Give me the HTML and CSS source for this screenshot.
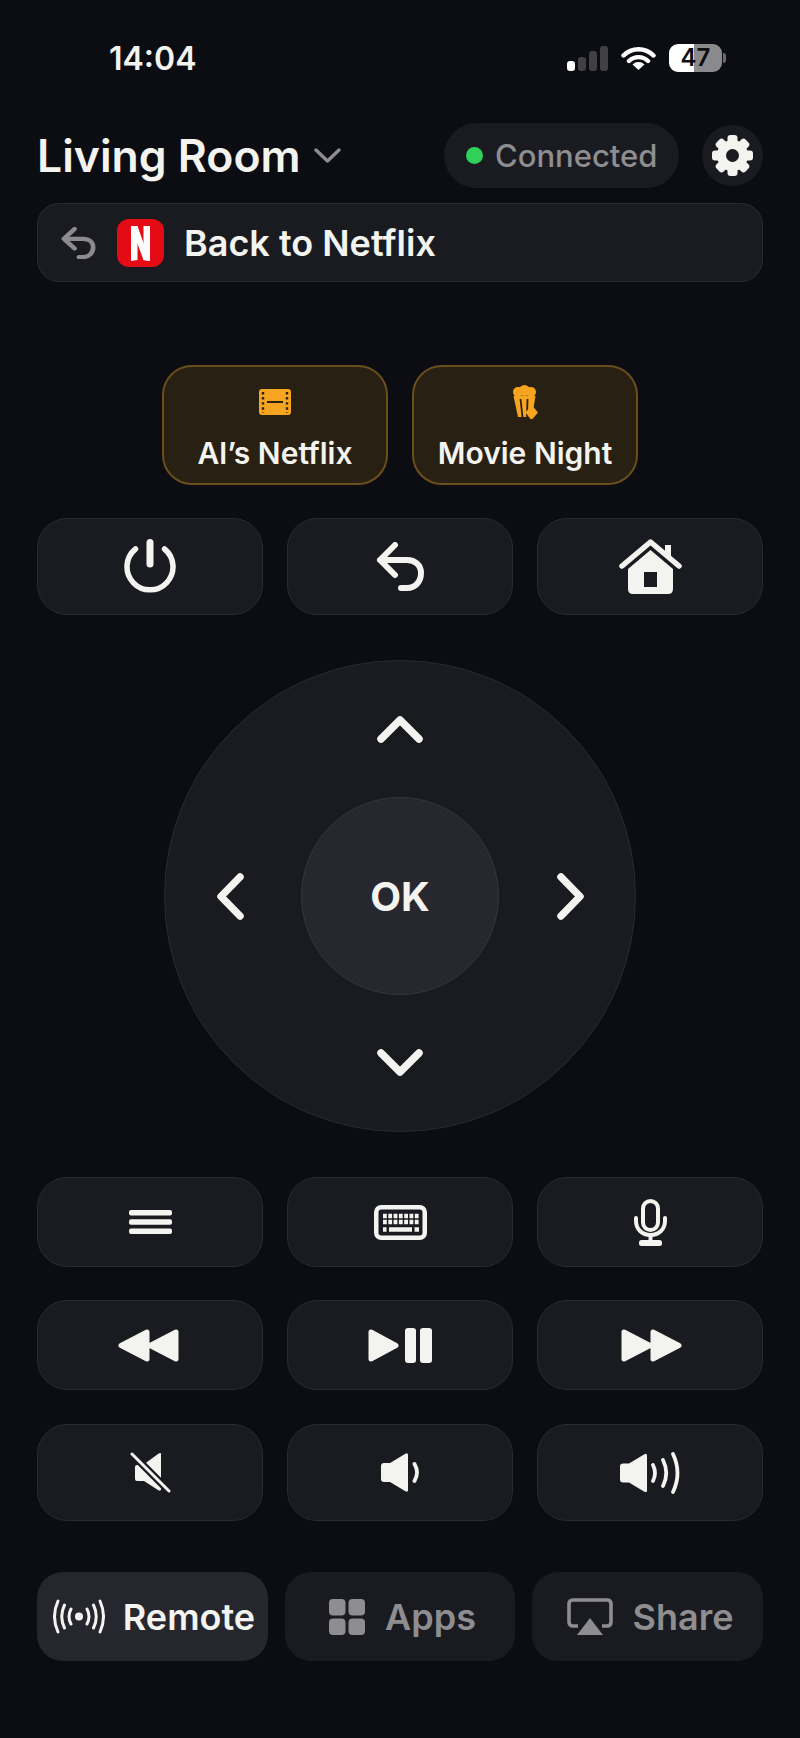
FILE: index.html

```html
<html>
    <head>
        <title>Remote</title>
        <link rel="stylesheet" href="styles.css">
    </head>
    <body>
        <div class="screen">
            <!-- status bar -->
            <div class="status-bar">
                <div class="time">14:04</div>
                <div class="status-icons">
                    <div class="signal">
                        <span class="bar bar-1"></span>
                        <span class="bar bar-2"></span>
                        <span class="bar bar-3"></span>
                        <span class="bar bar-4"></span>
                    </div>
                    <svg class="wifi" width="35" height="24" viewBox="0 0 35 24">
                        <path d="M2.5 9.5A21 21 0 0 1 32.5 9.5M8 15A13.5 13.5 0 0 1 27 15" fill="none" stroke="#fff" stroke-width="4.4" stroke-linecap="round"/>
                        <path d="M17.5 24L11.5 18.4A8.6 8.6 0 0 1 23.5 18.4Z" fill="#fff"/>
                    </svg>
                    <div class="battery-wrap">
                        <div class="battery">47</div>
                        <div class="battery-nub"></div>
                    </div>
                </div>
            </div>

            <!-- header -->
            <div class="header">
                <div class="room">Living Room</div>
                <svg class="room-caret" width="27" height="15" viewBox="0 0 27 15">
                    <path d="M2 2L13.5 13L25 2" fill="none" stroke="#8e8e91" stroke-width="3.4" stroke-linecap="round" stroke-linejoin="round"/>
                </svg>
                <div class="connected"><span class="dot"></span>Connected</div>
                <div class="settings">
                    <svg width="41" height="41" viewBox="0 0 41 41">
                        <g fill="#f3f3ef">
                            <rect x="15.5" y="0" width="10" height="41" rx="3"/>
                            <rect x="15.5" y="0" width="10" height="41" rx="3" transform="rotate(45 20.5 20.5)"/>
                            <rect x="15.5" y="0" width="10" height="41" rx="3" transform="rotate(90 20.5 20.5)"/>
                            <rect x="15.5" y="0" width="10" height="41" rx="3" transform="rotate(135 20.5 20.5)"/>
                            <circle cx="20.5" cy="20.5" r="15.5"/>
                        </g>
                        <circle cx="20.5" cy="20.5" r="6.5" fill="#1a1b21"/>
                    </svg>
                </div>
            </div>

            <div class="back-bar">
                <svg width="35" height="32" viewBox="0 0 49 49" preserveAspectRatio="none">
                    <path d="M19 3L4 18L19 33M4 18H31C39 18 45 23 45 31C45 40 39 46 31 46H25" fill="none" stroke="#8c8c8f" stroke-width="6.5" stroke-linecap="round" stroke-linejoin="round"/>
                </svg>
                <svg class="netflix" width="47" height="48" viewBox="0 0 47 48">
                    <rect width="47" height="48" rx="12" fill="#e50b14"/>
                    <path d="M14 7H20.5V41L14 42ZM26.500 7H33V42L26.500 41Z" fill="#fff"/>
                    <path d="M14 7H20.5L33 42L26.500 41Z" fill="#fff"/>
                </svg>
                <span class="back-label">Back to Netflix</span>
            </div>

            <!-- shortcuts -->
            <div class="shortcuts">
                <button class="shortcut">
                    <span class="shortcut-icon">
                        <svg width="32" height="26" viewBox="0 0 32 26">
                            <rect width="32" height="26" rx="3" fill="#f7a520"/>
                            <path d="M4 3V24M28 3V24" stroke="#2a2113" stroke-width="2.4" stroke-dasharray="2.4 2.7" fill="none"/>
                            <path d="M8 13H24" stroke="#2a2113" stroke-width="2" fill="none"/>
                        </svg>
                    </span>
                    <span class="shortcut-label">Al’s Netflix</span>
                </button>
                <button class="shortcut">
                    <span class="shortcut-icon">
                        <svg width="26" height="34" viewBox="0 0 26 34">
                            <g fill="#f7a520">
                                <circle cx="6" cy="7" r="5"/>
                                <circle cx="12.500" cy="5.500" r="5.500"/>
                                <circle cx="19" cy="7" r="5"/>
                                <path d="M1.500 11H23.500L20 32H6Z"/>
                            </g>
                            <path d="M8.500 14L10.500 32M15.500 14L15 32" stroke="#2a2113" stroke-width="1.800" fill="none"/>
                            <path d="M19 28L24 34H14Z" fill="#2a2113"/>
                            <path d="M19.500 21L25 27.500L19.500 34L14.500 27.500Z" fill="#f7a520" stroke="#f7a520" stroke-width="1.500" stroke-linejoin="round"/>
                        </svg>
                    </span>
                    <span class="shortcut-label">Movie Night</span>
                </button>
            </div>

            <div class="key-row tall row-top">
                <button class="key">
                    <svg width="52" height="55" viewBox="0 0 52 55">
                        <path d="M11.500 10A23 23 0 1 0 40.500 10" fill="none" stroke="#f3f3ef" stroke-width="5.500" stroke-linecap="round"/>
                        <path d="M26 3.500V25" stroke="#f3f3ef" stroke-width="7" stroke-linecap="round"/>
                    </svg>
                </button>
                <button class="key">
                    <svg width="49" height="49" viewBox="0 0 49 49">
                        <path d="M19 3L4 18L19 33M4 18H31C39 18 45 23 45 31C45 40 39 46 31 46H25" fill="none" stroke="#f3f3ef" stroke-width="6" stroke-linecap="round" stroke-linejoin="round"/>
                    </svg>
                </button>
                <button class="key">
                    <svg width="63" height="55" viewBox="0 0 63 55">
                        <path d="M3 27L31.500 3L60 27" fill="none" stroke="#f3f3ef" stroke-width="5.500" stroke-linecap="round" stroke-linejoin="round"/>
                        <rect x="46" y="6" width="6" height="12" fill="#f3f3ef"/>
                        <path fill-rule="evenodd" d="M31.500 11L54 30V50Q54 55 49 55H14Q9 55 9 50V30ZM25 33V48H38V33Z" fill="#f3f3ef"/>
                    </svg>
                </button>
            </div>

            <!-- d-pad -->
            <div class="dpad">
                <button class="arrow arrow-up">
                    <svg width="46" height="28" viewBox="0 0 46 28"><path d="M4 24L23 5L42 24"/></svg>
                </button>
                <button class="arrow arrow-left">
                    <svg width="28" height="47" viewBox="0 0 28 47"><path d="M24 4L5 23.500L24 43"/></svg>
                </button>
                <button class="ok">OK</button>
                <button class="arrow arrow-right">
                    <svg width="28" height="47" viewBox="0 0 28 47"><path d="M4 4L23 23.500L4 43"/></svg>
                </button>
                <button class="arrow arrow-down">
                    <svg width="46" height="28" viewBox="0 0 46 28"><path d="M4 4L23 23L42 4"/></svg>
                </button>
            </div>

            <div class="key-row row-menu">
                <button class="key">
                    <svg width="43" height="24" viewBox="0 0 43 24">
                        <g fill="#f3f3ef">
                            <rect width="43" height="5.500" rx="2"/>
                            <rect y="9.250" width="43" height="5.500" rx="2"/>
                            <rect y="18.500" width="43" height="5.500" rx="2"/>
                        </g>
                    </svg>
                </button>
                <button class="key">
                    <svg width="53" height="35" viewBox="0 0 53 35">
                        <rect x="2.250" y="2.250" width="48.500" height="30.500" rx="5" fill="none" stroke="#f3f3ef" stroke-width="4.500"/>
                        <path d="M9 11H45M9 17H45" stroke="#f3f3ef" stroke-width="4.500" stroke-dasharray="3.800 1.500" fill="none"/>
                        <path d="M9 24.500H12.500M15 24.500H38M40.500 24.500H45" stroke="#f3f3ef" stroke-width="4.500" fill="none"/>
                    </svg>
                </button>
                <button class="key">
                    <svg width="33" height="47" viewBox="0 0 33 47">
                        <rect x="9" y="2" width="15" height="29" rx="7.500" fill="none" stroke="#f3f3ef" stroke-width="4"/>
                        <path d="M2 19V22C2 30 8 36 16.500 36C25 36 31 30 31 22V19" fill="none" stroke="#f3f3ef" stroke-width="4" stroke-linecap="round"/>
                        <path d="M16.500 36V44" stroke="#f3f3ef" stroke-width="4" fill="none"/>
                        <rect x="5" y="41" width="23" height="6" rx="2.500" fill="#f3f3ef"/>
                    </svg>
                </button>
            </div>

            <div class="key-row row-media">
                <button class="key">
                    <svg class="rewind" width="61" height="35" viewBox="0 0 61 35">
                        <path class="media-shape" d="M29 4V31L3 17.500ZM58 4V31L32 17.500Z"/>
                    </svg>
                </button>
                <button class="key">
                    <svg width="64" height="35" viewBox="0 0 64 35">
                        <path class="media-shape" d="M3 4V31L28 17.500Z"/>
                        <rect x="37" y="0" width="11" height="35" rx="3" fill="#f3f3ef"/>
                        <rect x="52" y="0" width="12" height="35" rx="3" fill="#f3f3ef"/>
                    </svg>
                </button>
                <button class="key">
                    <svg class="forward" width="61" height="35" viewBox="0 0 61 35">
                        <path class="media-shape" d="M3 4V31L29 17.500ZM32 4V31L58 17.500Z"/>
                    </svg>
                </button>
            </div>

            <div class="key-row tall row-volume">
                <button class="key">
                    <svg width="41" height="41" viewBox="0 0 41 41">
                        <path d="M31 2V37Q31 40 28 38L14 29H7Q5 29 5 27V15Q5 13 7 13H13L28 2Q31 0 31 2Z" fill="#f3f3ef"/>
                        <path d="M2 2L39 39" stroke="#1a1b21" stroke-width="7.500" fill="none"/>
                        <path d="M2 2L39 39" stroke="#f3f3ef" stroke-width="3" stroke-linecap="round" fill="none"/>
                    </svg>
                </button>
                <button class="key">
                    <svg width="39" height="39" viewBox="0 0 39 39">
                        <path d="M3 10H9L24 1Q27 -1 27 2V37Q27 40 24 38L9 29H3Q0 29 0 26V13Q0 10 3 10Z" fill="#f3f3ef"/>
                        <path d="M33.500 11Q38.500 19.500 33.500 28" fill="none" stroke="#f3f3ef" stroke-width="3.800" stroke-linecap="round"/>
                    </svg>
                </button>
                <button class="key">
                    <svg width="61" height="42" viewBox="0 0 61 42">
                        <path d="M3 11.500H9L24 2.500Q27 .5 27 3.500V38.500Q27 41.500 24 39.500L9 30.500H3Q0 30.500 0 27.500V14.500Q0 11.500 3 11.500Z" fill="#f3f3ef"/>
                        <path d="M33 13Q37 21 33 29M43 8Q49.500 21 43 34M53 2Q62 21 53 40" fill="none" stroke="#f3f3ef" stroke-width="3.800" stroke-linecap="round"/>
                    </svg>
                </button>
            </div>

            <!-- tabs -->
            <div class="tabs">
                <button class="tab tab-active">
                    <svg width="52" height="35" viewBox="0 0 52 35">
                        <circle cx="26" cy="17.500" r="4" fill="#f3f3ef"/>
                        <path d="M18 10Q14 17.500 18 25M34 10Q38 17.500 34 25M11.500 6Q6 17.500 11.500 29M40.500 6Q46 17.500 40.500 29M5 2Q-2 17.500 5 33M47 2Q54 17.500 47 33" fill="none" stroke="#f3f3ef" stroke-width="3" stroke-linecap="round"/>
                    </svg>
                    <span>Remote</span>
                </button>
                <button class="tab">
                    <svg width="36" height="36" viewBox="0 0 36 36">
                        <g fill="#8e8e91">
                            <rect width="16.500" height="16.500" rx="4"/>
                            <rect x="19.500" width="16.500" height="16.500" rx="4"/>
                            <rect y="19.500" width="16.500" height="16.500" rx="4"/>
                            <rect x="19.500" y="19.500" width="16.500" height="16.500" rx="4"/>
                        </g>
                    </svg>
                    <span>Apps</span>
                </button>
                <button class="tab">
                    <svg width="46" height="37" viewBox="0 0 46 37">
                        <path d="M11 28H6Q2 28 2 24V6Q2 2 6 2H40Q44 2 44 6V24Q44 28 40 28H35" fill="none" stroke="#8e8e91" stroke-width="3.600"/>
                        <path d="M23 20L36 37H10Z" fill="#8e8e91"/>
                    </svg>
                    <span>Share</span>
                </button>
            </div>
        </div>
    </body>
</html>
```

FILE: styles.css

```css
body {
    margin: 0;
    background-color: #0c0d12;
    font-family: Inter, "Liberation Sans", sans-serif;
    color: #f3f3ef;
}
button {
    font-family: inherit;
    color: inherit;
    padding: 0;
    cursor: pointer;
}
svg {
    display: block;
}
.screen {
    width: 800px;
    height: 1738px;
    box-sizing: border-box;
    padding: 44px 37px 0;
    overflow: hidden;
}
.status-bar {
    height: 28px;
    display: flex;
    align-items: center;
    justify-content: space-between;
    padding-left: 72px;
    padding-right: 37px;
}
.time {
    font-size: 32px;
    font-weight: 600;
}
.status-icons {
    display: flex;
    align-items: center;
    gap: 13px;
}
.signal {
    display: flex;
    align-items: flex-end;
    gap: 3px;
    height: 25px;
}
.bar {
    width: 8px;
    border-radius: 3px;
    background-color: #414144;
}
.bar-1 {
    height: 10px;
    background-color: #fff;
}
.bar-2 {
    height: 14px;
}
.bar-3 {
    height: 20px;
}
.bar-4 {
    height: 25px;
}
.battery-wrap {
    display: flex;
    align-items: center;
    gap: 1px;
}
.battery {
    width: 53px;
    height: 28px;
    border-radius: 9px;
    background: linear-gradient(90deg, #fff 47%, #8a8a8c 47%);
    color: #0c0d12;
    font-size: 24px;
    font-weight: 600;
    line-height: 28px;
    text-align: center;
}
.battery-nub {
    width: 3px;
    height: 10px;
    border-radius: 0 3px 3px 0;
    background-color: #6d6d70;
}
.header {
    margin-top: 51px;
    height: 65px;
    display: flex;
    align-items: center;
}
.room {
    font-size: 44.5px;
    font-weight: 600;
}
.room-caret {
    margin-left: 13px;
}
.connected {
    margin-left: auto;
    width: 235px;
    height: 65px;
    box-sizing: border-box;
    border-radius: 33px;
    background-color: #1a1b21;
    display: flex;
    align-items: center;
    padding-left: 22px;
    gap: 12px;
    font-size: 31px;
    font-weight: 500;
    color: #8e8e91;
}
.dot {
    width: 17px;
    height: 17px;
    border-radius: 50%;
    background-color: #2fd158;
}
.settings {
    margin-left: 23px;
    width: 61px;
    height: 61px;
    border-radius: 50%;
    background-color: #1a1b21;
    display: flex;
    align-items: center;
    justify-content: center;
}
.back-bar {
    margin-top: 15px;
    height: 79px;
    box-sizing: border-box;
    border: 1.5px solid #2a2b31;
    border-radius: 22px;
    background-color: #1a1b21;
    display: flex;
    align-items: center;
    padding-left: 23px;
}
.netflix {
    margin-left: 21px;
}
.back-label {
    margin-left: 20px;
    font-size: 36px;
    font-weight: 600;
}
.shortcuts {
    margin-top: 83px;
    display: flex;
    justify-content: center;
    gap: 24px;
}
.shortcut {
    width: 226px;
    height: 120px;
    box-sizing: border-box;
    border: 2px solid #6b4e1c;
    border-radius: 30px;
    background-color: #282012;
    display: flex;
    flex-direction: column;
    align-items: center;
}
.shortcut-icon {
    height: 36px;
    margin-top: 17px;
    display: flex;
    align-items: center;
}
.shortcut-label {
    margin-top: 15px;
    font-size: 30px;
    font-weight: 600;
}
.key-row {
    display: grid;
    grid-template-columns: repeat(3, 1fr);
    gap: 24px;
}
.row-top {
    margin-top: 33px;
}
.row-menu {
    margin-top: 45px;
}
.row-media {
    margin-top: 33px;
}
.row-volume {
    margin-top: 34px;
}
.key {
    height: 90px;
    box-sizing: border-box;
    border: 1.5px solid #2a2b31;
    border-radius: 30px;
    background-color: #1a1b21;
    display: flex;
    align-items: center;
    justify-content: center;
}
.tall .key {
    height: 97px;
}
.media-shape {
    fill: #f3f3ef;
    stroke: #f3f3ef;
    stroke-width: 5;
    stroke-linejoin: round;
}
.rewind {
    margin-right: 4px;
}
.forward {
    margin-left: 3px;
}
.dpad {
    margin: 45px auto 0;
    width: 472px;
    height: 472px;
    box-sizing: border-box;
    border: 1.5px solid #2a2b31;
    border-radius: 50%;
    background-color: #1a1b21;
    display: grid;
    grid-template-columns: 129px 1fr 129px;
    grid-template-rows: 136px 1fr 136px;
    justify-items: center;
    align-items: center;
}
.arrow {
    border: none;
    background: none;
}
.arrow path {
    fill: none;
    stroke: #f3f3ef;
    stroke-width: 7.5;
    stroke-linecap: round;
    stroke-linejoin: round;
}
.arrow-up {
    grid-column: 2;
    grid-row: 1;
}
.arrow-left {
    grid-column: 1;
    grid-row: 2;
}
.arrow-right {
    grid-column: 3;
    grid-row: 2;
}
.arrow-down {
    grid-column: 2;
    grid-row: 3;
}
.ok {
    grid-column: 2;
    grid-row: 2;
    width: 198px;
    height: 198px;
    box-sizing: border-box;
    border: 1.5px solid #36373e;
    border-radius: 50%;
    background-color: #27272f;
    font-size: 40px;
    font-weight: 700;
}
.tabs {
    margin-top: 51px;
    display: grid;
    grid-template-columns: 231px 230px 231px;
    gap: 17px;
}
.tab {
    height: 89px;
    border: none;
    border-radius: 26px;
    background-color: #1a1b21;
    display: flex;
    align-items: center;
    justify-content: center;
    gap: 20px;
    padding-left: 5px;
    font-size: 36px;
    font-weight: 600;
    color: #8e8e91;
}
.tab-active {
    gap: 18px;
    padding-left: 3px;
    background-color: #26262f;
    color: #f3f3ef;
}
```
